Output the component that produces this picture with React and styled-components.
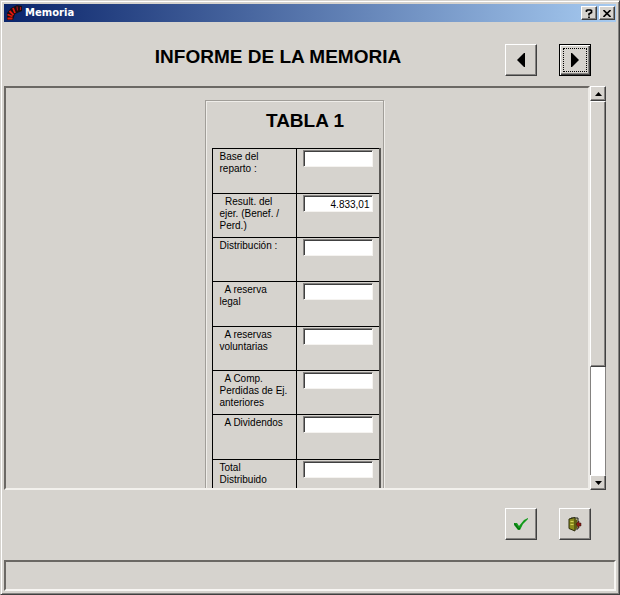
import React from "react";
import styled, { createGlobalStyle, css } from "styled-components";

const face = "#d6d3ce";

const GlobalStyle = createGlobalStyle`
  *, *::before, *::after { box-sizing: border-box; }
  body { margin: 0; background: ${face}; }
  button, input { font: inherit; color: inherit; margin: 0; }
`;

const raised = css`
  border: 1px solid;
  border-color: #ffffff #404040 #404040 #ffffff;
  box-shadow: inset -1px -1px 0 #848280;
`;

const Window = styled.main`
  display: flex;
  flex-direction: column;
  height: 100vh;
  padding: 2px 3px 2px 3px;
  border: 1px solid;
  border-color: ${face} #404040 #404040 ${face};
  box-shadow: inset 1px 1px 0 #ffffff, inset -1px -1px 0 #848280;
  background: ${face};
  color: #000;
  font-family: "Liberation Sans", Arial, sans-serif;
  font-size: 10px;
  line-height: 12px;
`;

const TitleBar = styled.header`
  display: flex;
  align-items: center;
  gap: 2px;
  height: 18px;
  margin-top: 1px;
  padding: 0 1px 0 2px;
  background: linear-gradient(90deg, #0a246a, #a6caf0);
`;

const Caption = styled.span`
  flex: 1;
  color: #fff;
  font: bold 10px/16px "DejaVu Sans", sans-serif;
`;

const CaptionButton = styled.button`
  ${raised}
  display: grid;
  place-items: center;
  width: 16px;
  height: 14px;
  padding: 0;
  background: ${face};
`;

const Header = styled.section`
  display: flex;
  align-items: center;
  gap: 22px;
  padding: 22px 25px 10px 69px;
`;

const Heading = styled.h1`
  flex: 1;
  margin: 0;
  padding-bottom: 6px;
  text-align: center;
  font: bold 19px/24px "Liberation Sans", sans-serif;
`;

const ToolButton = styled.button`
  ${raised}
  display: grid;
  place-items: center;
  width: 32px;
  height: 32px;
  padding: 0;
  background: ${face};
  ${(p) =>
    p.$current &&
    css`
      border-color: #000;
      box-shadow: inset 1px 1px 0 #fff, inset -1px -1px 0 #404040, inset -2px -2px 0 #848280;
      & > svg {
        box-sizing: content-box;
        padding: 2px 3px;
        outline: 1px dotted #000;
      }
    `}
`;

const Viewer = styled.section`
  display: flex;
  flex: 1;
  min-height: 0;
  margin-right: 10px;
`;

const Viewport = styled.div`
  flex: 1;
  overflow: hidden;
  padding: 12px 6px 0 0;
  border: 2px solid;
  border-color: #6b6864 #eeece8 #f3f1ed #6b6864;
`;

const Frame = styled.article`
  width: 179px;
  margin: 0 auto;
  padding: 8px 2px 16px 6px;
  border: 1px solid #a19e99;
  box-shadow: inset 1px 1px 0 #efede9, 1px 1px 0 #efede9;
`;

const FrameTitle = styled.h2`
  margin: 0 0 15px;
  padding: 0 4px 0 22px;
  text-align: center;
  font: bold 19px/24px "Liberation Sans", sans-serif;
`;

const Table = styled.table`
  width: 169px;
  border-collapse: collapse;
  table-layout: fixed;
`;

const Row = styled.tr`
  height: 44px;
  &:nth-child(3n + 1) {
    height: 45px;
  }
`;

const Label = styled.th`
  width: 84px;
  padding: 2px 4px 0 7px;
  border: 1px solid #000;
  vertical-align: top;
  text-align: left;
  font-weight: normal;
  white-space: nowrap;
`;

const LabelText = styled.label`
  display: block;
  white-space: pre;
`;

const ValueCell = styled.td`
  padding: 1px 0 0 6px;
  border: 1px solid #000;
  border-right: 2px solid #5a5855;
  vertical-align: top;
`;

const Amount = styled.input`
  display: block;
  width: 70px;
  height: 17px;
  padding: 1px 2px 0;
  border: 1px solid;
  border-color: #848280 #f5f3f0 #f5f3f0 #848280;
  border-radius: 0;
  box-shadow: inset 1px 1px 0 #404040;
  background: #fff;
  text-align: right;
`;

const ScrollBar = styled.div`
  display: flex;
  flex-direction: column;
  width: 16px;
`;

const ScrollButton = styled.button`
  ${raised}
  display: grid;
  place-items: center;
  height: 15px;
  padding: 0;
  background: ${face};
`;

const Track = styled.div`
  display: flex;
  flex: 1;
  flex-direction: column;
  border: solid #848280;
  border-width: 0 1px;
  background: #fff;
`;

const Thumb = styled.div`
  ${raised}
  flex: 0 0 71%;
  margin: 0 -1px;
  background: ${face};
`;

const Actions = styled.footer`
  display: flex;
  justify-content: flex-end;
  gap: 22px;
  padding: 18px 25px 20px;
`;

const StatusBar = styled.div`
  height: 31px;
  margin-bottom: 1px;
  border: 2px solid;
  border-color: #6b6864 #f8f6f3 #f8f6f3 #6b6864;
`;

const rows = [
  { label: "Base del\nreparto :", value: "" },
  { label: "  Result. del\nejer. (Benef. /\nPerd.)", value: "4.833,01" },
  { label: "Distribución :", value: "" },
  { label: "  A reserva\nlegal", value: "" },
  { label: "  A reservas\nvoluntarias", value: "" },
  { label: "  A Comp.\nPerdidas de Ej.\nanteriores", value: "" },
  { label: "  A Dividendos", value: "" },
  { label: "Total\nDistribuido", value: "" },
];

const AppIcon = () => (
  <svg width="17" height="16" viewBox="0 0 17 16" aria-hidden="true">
    <path d="M1 15 1 8 5 3 11 0 16 1 16 6 9 9 7 15z" fill="#180c12" />
    <g fill="none" stroke="#e3180c" strokeWidth="1.8">
      <path d="M1.500 13.500h5M1.500 9.500l5 2M3.500 6l4 4M7 3l2 5" />
      <path d="M11 1.500l.5 4M14.500 2v3" stroke="#a8141a" strokeWidth="1.2" />
    </g>
  </svg>
);

const ArrowIcon = ({ back }) => (
  <svg width="16" height="18" viewBox="0 0 16 18" aria-hidden="true">
    <path d={back ? "M4 9 11 2h1v14h-1z" : "M12 9 5 2H4v14h1z"} fill="#000" />
  </svg>
);

const ScrollIcon = ({ up }) => (
  <svg width="7" height="4" viewBox="0 0 7 4" aria-hidden="true">
    <path d={up ? "M3.500 0 7 4H0z" : "M0 0h7L3.500 4z"} fill="#000" />
  </svg>
);

const CheckIcon = () => (
  <svg width="16" height="14" viewBox="0 0 16 14" aria-hidden="true">
    <path d="M1 6h3l2 3L11 3l4-2v1L10 7l-3 6H5L1 8z" fill="#129a1a" />
    <path d="M1.500 6.500 5.500 12l1.500-1" fill="none" stroke="#075c0c" />
  </svg>
);

const ExitIcon = () => (
  <svg width="16" height="16" viewBox="0 0 16 16" aria-hidden="true">
    <path d="M4 2h7v11H4z" fill="#c9c39a" stroke="#222" />
    <path d="M2 3 8 1.500V15L2 12.500z" fill="#8b8c1e" stroke="#2c2c0c" />
    <path d="M3.500 5.500h3M3.500 8.500h3" stroke="#d3d35a" />
    <path d="M8 3l2 1v8l-2 2z" fill="#5d5d12" />
    <path d="M9 8l3-3v2h2v3h-2v2z" fill="#8c1c14" stroke="#30100c" strokeWidth=".5" />
  </svg>
);

export default function App() {
  return (
    <>
      <GlobalStyle />
      <Window>
        <TitleBar>
          <AppIcon />
          <Caption>Memoria</Caption>
          <CaptionButton type="button" aria-label="Ayuda">
            <svg width="8" height="9" viewBox="0 0 8 9" aria-hidden="true">
              <path d="M1.500 3V1.500L2.500 1h3l1 .5v2L4 5v1.500M4 7.500V9" fill="none" stroke="#000" strokeWidth="1.700" />
            </svg>
          </CaptionButton>
          <CaptionButton type="button" aria-label="Cerrar">
            <svg width="8" height="7" viewBox="0 0 8 7" aria-hidden="true">
              <path d="M.5 0 7.500 7M7.500 0 .5 7" stroke="#000" strokeWidth="1.600" />
            </svg>
          </CaptionButton>
        </TitleBar>

        <Header>
          <Heading>INFORME DE LA MEMORIA</Heading>
          <ToolButton type="button" aria-label="Anterior">
            <ArrowIcon back />
          </ToolButton>
          <ToolButton type="button" aria-label="Siguiente" $current>
            <ArrowIcon />
          </ToolButton>
        </Header>

        <Viewer>
          <Viewport>
            <Frame>
              <FrameTitle>TABLA 1</FrameTitle>
              <Table>
                <tbody>
                  {rows.map((row, i) => (
                    <Row key={row.label}>
                      <Label scope="row">
                        <LabelText htmlFor={`importe-${i}`}>{row.label}</LabelText>
                      </Label>
                      <ValueCell>
                        <Amount id={`importe-${i}`} type="text" defaultValue={row.value} />
                      </ValueCell>
                    </Row>
                  ))}
                </tbody>
              </Table>
            </Frame>
          </Viewport>
          <ScrollBar>
            <ScrollButton type="button" aria-label="Subir">
              <ScrollIcon up />
            </ScrollButton>
            <Track>
              <Thumb />
            </Track>
            <ScrollButton type="button" aria-label="Bajar">
              <ScrollIcon />
            </ScrollButton>
          </ScrollBar>
        </Viewer>

        <Actions>
          <ToolButton type="button" aria-label="Aceptar">
            <CheckIcon />
          </ToolButton>
          <ToolButton type="button" aria-label="Salir">
            <ExitIcon />
          </ToolButton>
        </Actions>
        <StatusBar role="status" />
      </Window>
    </>
  );
}
